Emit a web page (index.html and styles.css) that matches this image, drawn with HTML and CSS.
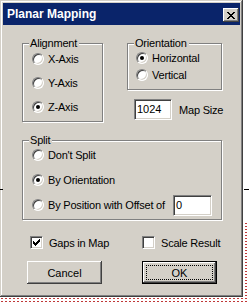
FILE: index.html
```html
<!DOCTYPE html>
<html>
<head>
<meta charset="utf-8">
<link rel="stylesheet" href="styles.css">
</head>
<body>
<div class="window">
  <div class="titlebar">
    <span class="title">Planar Mapping</span>
    <span class="close"><svg width="8" height="7" viewBox="0 0 8 7" shape-rendering="crispEdges"><path fill="#000" d="M0 0h2v1h-2zM6 0h2v1h-2zM1 1h2v1h-2zM5 1h2v1h-2zM2 2h4v1h-4zM3 3h2v1h-2zM2 4h4v1h-4zM1 5h2v1h-2zM5 5h2v1h-2zM0 6h2v1h-2zM6 6h2v1h-2z"/></svg></span>
  </div>
  <div class="content">
    <div class="row-top">
      <div class="group group-align">
        <span class="legend">Alignment</span>
        <div class="opt"><span class="radio"></span>X-Axis</div>
        <div class="opt"><span class="radio"></span>Y-Axis</div>
        <div class="opt"><span class="radio on"></span>Z-Axis</div>
      </div>
      <div class="right-col">
        <div class="group group-orient">
          <span class="legend">Orientation</span>
          <div class="opt opt-small"><span class="radio on"></span>Horizontal</div>
          <div class="opt opt-small"><span class="radio"></span>Vertical</div>
        </div>
        <div class="mapsize">
          <span class="edit">1024</span>
          <span>Map Size</span>
        </div>
      </div>
    </div>
    <div class="group group-split">
      <span class="legend">Split</span>
      <div class="opt"><span class="radio"></span>Don't Split</div>
      <div class="opt"><span class="radio on"></span>By Orientation</div>
      <div class="opt">
        <span class="offset-label"><span class="radio"></span>By Position with Offset of</span>
        <span class="edit edit-offset">0</span>
      </div>
    </div>
    <div class="checks">
      <div class="check-item check-first"><span class="checkbox"><svg width="7" height="7" viewBox="0 0 7 7" shape-rendering="crispEdges"><path fill="#000" d="M6 0h1v1h-1zM5 1h2v1h-2zM0 2h1v1h-1zM4 2h3v1h-3zM0 3h2v1h-2zM3 3h3v1h-3zM0 4h5v1h-5zM1 5h3v1h-3zM2 6h1v1h-1z"/></svg></span>Gaps in Map</div>
      <div class="check-item"><span class="checkbox"></span>Scale Result</div>
    </div>
    <div class="buttons">
      <div class="btn">Cancel</div>
      <div class="btn btn-default"><span class="focus">OK</span></div>
    </div>
  </div>
</div>
</body>
</html>
```

FILE: styles.css
```css
body {
  margin: 0;
  width: 249px;
  height: 303px;
  overflow: hidden;
  position: relative;
  background-color: #fff;
  background-image: linear-gradient(#fff, #fff), radial-gradient(circle, #c03838 0.6px, transparent 1.1px);
  background-size: 249px 222px, 4px 3px;
  background-repeat: no-repeat, repeat;
  font-family: "Liberation Sans", Arial, sans-serif;
  font-size: 11px;
  letter-spacing: -0.2px;
  color: #000;
}

body::before,
body::after {
  content: "";
  position: absolute;
  top: 189px;
  height: 1px;
  background: #000;
}

body::before {
  left: 0;
  width: 3px;
}

body::after {
  left: 244px;
  width: 5px;
}

.window {
  width: 243px;
  height: 297px;
  box-sizing: border-box;
  padding: 3px;
  background: #d4d0c8;
  box-shadow: inset -1px -1px #404040, inset 1px 1px #d4d0c8, inset -2px -2px #808080, inset 2px 2px #fff;
}

.titlebar {
  height: 22px;
  background: #0a246a;
  display: flex;
  align-items: center;
  justify-content: space-between;
  padding: 0 1px 0 4px;
  color: #fff;
  font-weight: bold;
  font-size: 12px;
  letter-spacing: 0;
}

.close {
  width: 16px;
  height: 14px;
  box-sizing: border-box;
  margin-top: 2px;
  background: #d4d0c8;
  box-shadow: inset -1px -1px #404040, inset 1px 1px #fff, inset -2px -2px #808080;
  display: flex;
  align-items: center;
  justify-content: center;
}

.close svg {
  display: block;
}

.content {
  padding: 18px 0 0 19px;
}

.row-top {
  display: flex;
}

.group {
  position: relative;
  box-sizing: border-box;
  border: 1px solid #808080;
  box-shadow: 1px 1px 0 #fff, inset 1px 1px 0 #fff;
  display: flex;
  flex-direction: column;
}

.legend {
  position: absolute;
  top: -7px;
  left: 6px;
  padding: 0 2px 0 1px;
  background: #d4d0c8;
  line-height: 13px;
}

.group-align {
  width: 81px;
  height: 79px;
  padding: 4px 0 0 9px;
  gap: 2px;
}

.opt {
  display: flex;
  align-items: center;
  gap: 4px;
  height: 22px;
}

.opt-small {
  height: 14px;
}

.radio {
  position: relative;
  flex: none;
  width: 12px;
  height: 12px;
  box-sizing: border-box;
  border-radius: 50%;
  border: 1px solid;
  border-color: #808080 #fff #fff #808080;
  background: #fff;
  box-shadow: inset 1px 1px #404040, inset -1px -1px #d4d0c8;
}

.radio.on::after {
  content: "";
  position: absolute;
  left: 3px;
  top: 3px;
  width: 4px;
  height: 4px;
  border-radius: 50%;
  background: #000;
}

.right-col {
  margin-left: 24px;
}

.group-orient {
  width: 95px;
  height: 47px;
  padding: 7px 0 0 8px;
  gap: 3px;
}

.mapsize {
  display: flex;
  align-items: center;
  gap: 7px;
  margin-top: 9px;
  padding-left: 7px;
}

.edit {
  width: 38px;
  height: 21px;
  box-sizing: border-box;
  background: #fff;
  border: 1px solid;
  border-color: #808080 #fff #fff #808080;
  box-shadow: inset 1px 1px #404040, inset -1px -1px #d4d0c8;
  padding: 0 2px;
  line-height: 19px;
  letter-spacing: 0;
}

.group-split {
  margin-top: 18px;
  width: 200px;
  height: 80px;
  padding: 3px 0 0 9px;
  gap: 3px;
}

.offset-label {
  flex: none;
  width: 141px;
  display: flex;
  align-items: center;
  gap: 4px;
  margin-right: -4px;
}

.edit-offset {
  width: 39px;
}

.checks {
  display: flex;
  height: 13px;
  margin-top: 16px;
  padding-left: 8px;
}

.check-item {
  display: flex;
  align-items: center;
  gap: 6px;
}

.check-first {
  width: 112px;
}

.checkbox {
  flex: none;
  width: 13px;
  height: 13px;
  box-sizing: border-box;
  border: 1px solid;
  border-color: #808080 #fff #fff #808080;
  background: #fff;
  box-shadow: inset 1px 1px #404040, inset -1px -1px #d4d0c8;
  display: flex;
  align-items: center;
  justify-content: center;
}

.checkbox svg {
  display: block;
}

.buttons {
  display: flex;
  gap: 40px;
  margin-top: 12px;
  padding-left: 5px;
}

.btn {
  width: 75px;
  height: 23px;
  box-sizing: border-box;
  background: #d4d0c8;
  box-shadow: inset -1px -1px #404040, inset 1px 1px #fff, inset -2px -2px #808080;
  display: flex;
  align-items: center;
  justify-content: center;
  letter-spacing: 0;
}

.btn-default {
  box-shadow: inset 0 0 0 1px #000, inset -2px -2px #404040, inset 2px 2px #fff, inset -3px -3px #808080;
}

.focus {
  width: 67px;
  height: 15px;
  box-sizing: border-box;
  border: 1px dotted #000;
  display: flex;
  align-items: center;
  justify-content: center;
}
```
